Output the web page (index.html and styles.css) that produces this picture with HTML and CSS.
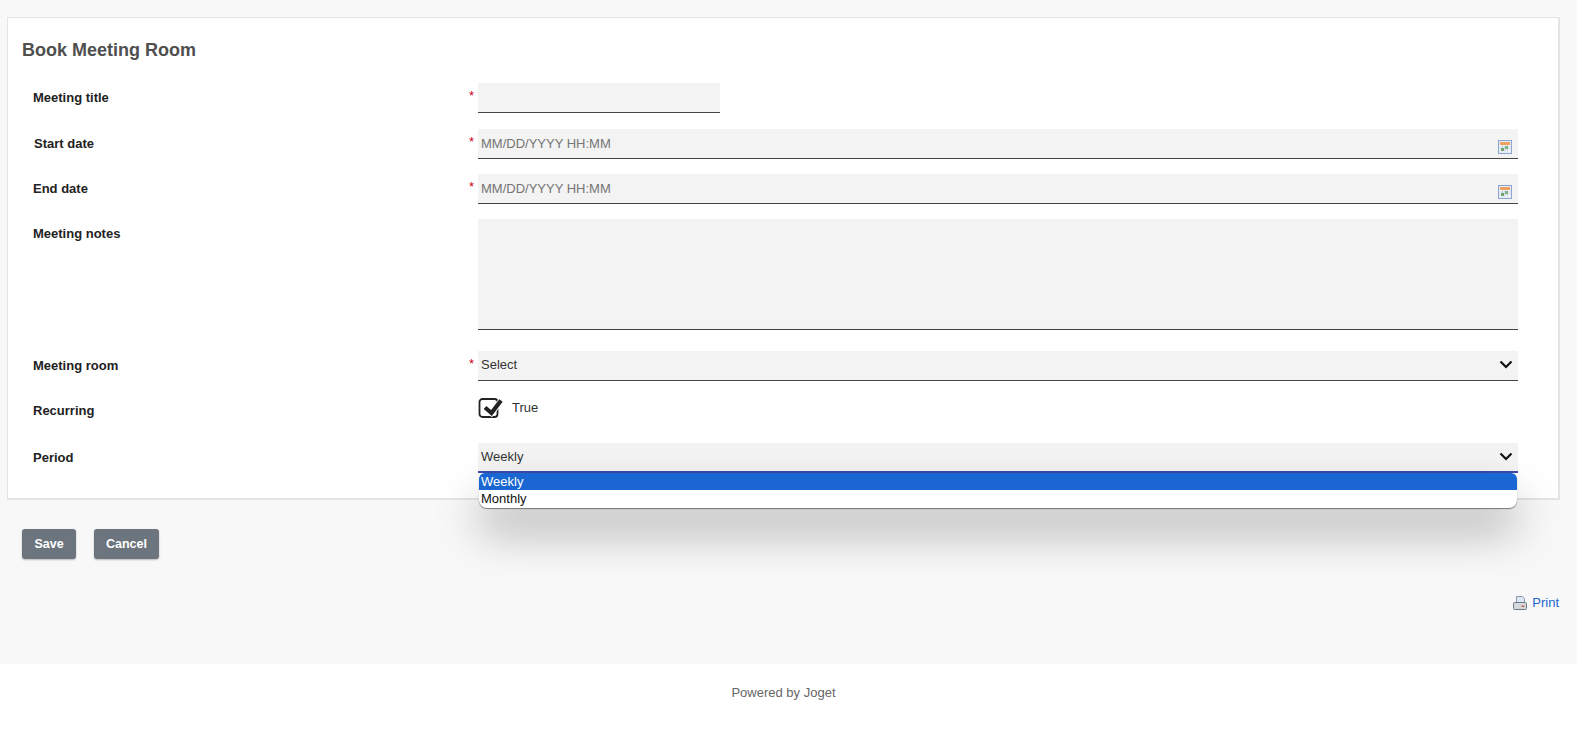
FILE: index.html
```html
<!DOCTYPE html>
<html lang="en">
<head>
<meta charset="utf-8">
<title>Book Meeting Room</title>
<link rel="stylesheet" href="styles.css">
</head>
<body>
<main class="page">
  <form class="card">
    <h1 class="title">Book Meeting Room</h1>
    <div class="row row-title">
      <label class="label">Meeting title</label>
      <span class="req">*</span>
      <div class="field field-short"></div>
    </div>
    <div class="row row-start">
      <label class="label label-shift">Start date</label>
      <span class="req">*</span>
      <div class="field placeholder">MM/DD/YYYY HH:MM
        <svg class="cal" viewBox="0 0 14 14" width="14" height="14"><rect x=".5" y=".5" width="13" height="13" fill="#e4ecf8" stroke="#8ea6cf"/><rect x="2" y="2" width="10" height="3" fill="#f0a060"/><rect x="2" y="5" width="10" height="7" fill="#f6f8fb"/><path d="M2 7h10M2 9h10M4.500 5v7M7 5v7M9.500 5v7" stroke="#b9c8dc" stroke-width=".7"/><rect x="3" y="8" width="3" height="3" fill="#6fa56f"/><rect x="7" y="6" width="3" height="3" fill="#7fb57f"/></svg>
      </div>
    </div>
    <div class="row row-end">
      <label class="label">End date</label>
      <span class="req">*</span>
      <div class="field placeholder">MM/DD/YYYY HH:MM
        <svg class="cal" viewBox="0 0 14 14" width="14" height="14"><rect x=".5" y=".5" width="13" height="13" fill="#e4ecf8" stroke="#8ea6cf"/><rect x="2" y="2" width="10" height="3" fill="#f0a060"/><rect x="2" y="5" width="10" height="7" fill="#f6f8fb"/><path d="M2 7h10M2 9h10M4.500 5v7M7 5v7M9.500 5v7" stroke="#b9c8dc" stroke-width=".7"/><rect x="3" y="8" width="3" height="3" fill="#6fa56f"/><rect x="7" y="6" width="3" height="3" fill="#7fb57f"/></svg>
      </div>
    </div>
    <div class="row row-notes">
      <label class="label">Meeting notes</label>
      <span class="req req-empty"></span>
      <div class="field field-area"></div>
    </div>
    <div class="row row-room">
      <label class="label">Meeting room</label>
      <span class="req">*</span>
      <div class="field select">Select
        <svg class="chev" viewBox="0 0 14 9" width="14" height="9"><path d="M1.500 1.500 7 7l5.500-5.500" fill="none" stroke="#111" stroke-width="2.200"/></svg>
      </div>
    </div>
    <div class="row row-recurring">
      <label class="label">Recurring</label>
      <span class="req req-empty"></span>
      <div class="check-wrap">
        <svg class="check" viewBox="0 0 25 22" width="25" height="22"><rect x="1.500" y="2" width="18" height="18" rx="3" fill="#fff" stroke="#222" stroke-width="1.800"/><path d="M7 10.500 13.500 16 23.500 3" fill="none" stroke="#fff" stroke-width="6"/><path d="M7 10.500 13.500 16 23 3.500" fill="none" stroke="#222" stroke-width="4.200"/></svg>
        <span class="check-text">True</span>
      </div>
    </div>
    <div class="row row-period">
      <label class="label">Period</label>
      <span class="req req-empty"></span>
      <div class="field select select-open">Weekly
        <svg class="chev" viewBox="0 0 14 9" width="14" height="9"><path d="M1.500 1.500 7 7l5.500-5.500" fill="none" stroke="#111" stroke-width="2.200"/></svg>
        <ul class="dropdown">
          <li class="option option-on">Weekly</li>
          <li class="option">Monthly</li>
        </ul>
      </div>
    </div>
  </form>
  <div class="actions">
    <button type="button" class="btn">Save</button>
    <button type="button" class="btn">Cancel</button>
  </div>
  <div class="print-row">
    <a class="print" href="#">
      <svg viewBox="0 0 14 14" width="14" height="14"><path d="M3.500.5h6l2 2v5h-8z" fill="#dbe7f5" stroke="#8a97a8"/><rect x=".5" y="6.500" width="13" height="7" rx="1" fill="#d5d8dd" stroke="#6f7a88"/><rect x="8.500" y="9.500" width="3" height="1.500" fill="#b96a4a"/></svg>
      Print
    </a>
  </div>
</main>
<footer class="footer">Powered by Joget</footer>
</body>
</html>
```
FILE: styles.css
```css
* { box-sizing: border-box; }
html, body { margin: 0; height: 731px; overflow: hidden; }
body {
  background: #f8f8f8;
  font-family: "Liberation Sans", Arial, sans-serif;
  font-size: 13px;
  color: #222;
}
.page { height: 664px; padding: 17px 17px 0 7px; }
.card {
  height: 483px;
  background: #fff;
  border: 1px solid #e4e4e4;
  border-width: 1px 2px 2px 1px;
  padding: 22px 40px 0 14px;
}
.title {
  margin: 0 0 23px;
  font-size: 18px;
  line-height: 20px;
  font-weight: 700;
  color: #4f4f4f;
}
.row { display: flex; align-items: flex-start; }
.label {
  width: 437px;
  padding: 7px 0 0 11px;
  font-size: 13px;
  line-height: 16px;
  font-weight: 700;
  color: #222;
  flex: none;
}
.label-shift { padding-left: 12px; }
.req {
  width: 9px;
  margin-top: 6px;
  flex: none;
  margin-left: 10px;
  color: #d0021b;
  font-size: 13px;
  line-height: 14px;
}
.req-empty { height: 1px; }
.row-title { margin-bottom: 16px; }
.row-start, .row-end { margin-bottom: 15px; }
.row-notes { margin-bottom: 21px; }
.row-room { margin-bottom: 15px; }
.row-recurring { margin-bottom: 24px; }
.field {
  position: relative;
  flex: 1;
  height: 30px;
  padding-left: 3px;
  background: #f3f3f3;
  border-bottom: 1px solid #444;
  font-size: 13px;
  line-height: 29px;
  color: #333;
}
.select { line-height: 27px; }
.field-short { flex: 0 0 242px; }
.field-area { height: 111px; }
.placeholder { color: #757575; }
.cal { position: absolute; right: 6px; top: 11px; }
.chev { position: absolute; right: 5px; top: 9px; }
.check-wrap { display: flex; align-items: center; height: 22px; margin-top: 1px; gap: 9px; }
.check { flex: none; }
.check-text { font-size: 13px; color: #333; padding-bottom: 2px; }
.select-open { border-bottom: 2px solid #3c4aa8; }
.dropdown {
  position: absolute;
  left: 1px;
  right: 1px;
  top: 30px;
  height: 35px;
  margin: 0;
  padding: 0;
  list-style: none;
  background: #fff;
  border-radius: 6px 6px 8px 8px;
  box-shadow: 0 1px 1px rgba(0, 0, 0, .45), 0 25px 45px rgba(0, 0, 0, .27);
  z-index: 2;
}
.option {
  height: 17px;
  padding-left: 2px;
  font-size: 13px;
  line-height: 17px;
  color: #111;
}
.option-on { background: #1a66d2; color: #fff; border-radius: 6px 6px 0 0; }
.actions { display: flex; gap: 18px; padding: 29px 0 0 15px; }
.btn {
  height: 30px;
  min-width: 54px;
  padding: 0 12px;
  border: 0;
  border-radius: 3px;
  background: #6c757d;
  color: #fff;
  font: 700 12.500px "Liberation Sans", Arial, sans-serif;
  box-shadow: 0 1px 2px rgba(0, 0, 0, .25);
}
.print-row { display: flex; justify-content: flex-end; padding: 36px 1px 0 0; }
.print {
  display: flex;
  align-items: center;
  gap: 5px;
  color: #1a66d2;
  font-size: 13px;
  line-height: 16px;
  text-decoration: none;
}
.footer {
  height: 67px;
  background: #fff;
  padding: 21px 10px 0 0;
  text-align: center;
  font-size: 13px;
  line-height: 16px;
  color: #666;
}
```
